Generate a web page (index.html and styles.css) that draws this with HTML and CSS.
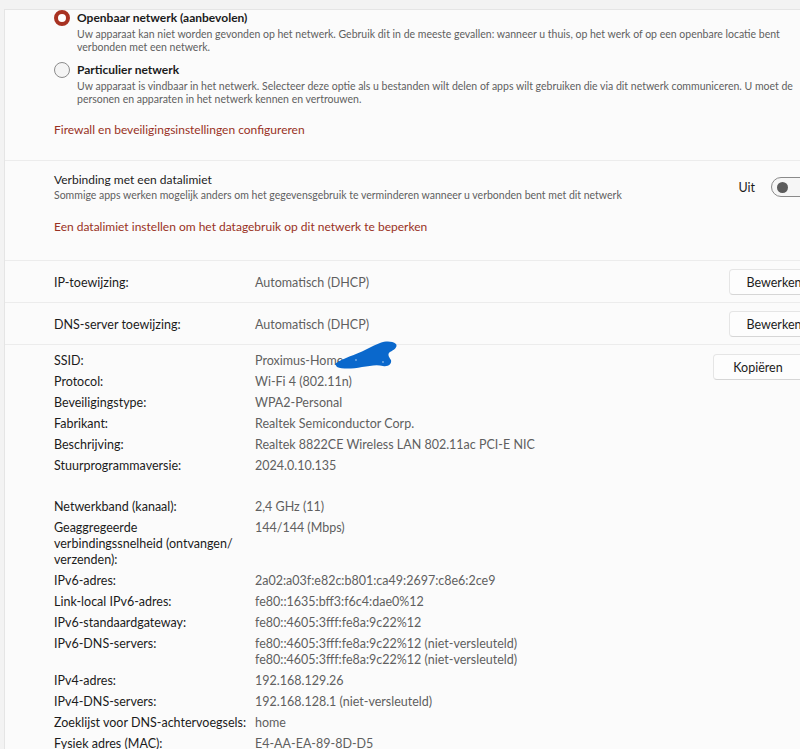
FILE: index.html
```html
<!DOCTYPE html>
<html lang="nl">
<head>
  <meta charset="UTF-8" />
  <title>Wi-Fi eigenschappen</title>
  <link rel="stylesheet" href="styles.css">
</head>
<body>
  <div class="card">

    <section class="section profile">
      <div class="radio-row">
        <span class="radio checked"></span>
        <div>
          <div class="radio-title">Openbaar netwerk (aanbevolen)</div>
          <div class="desc">Uw apparaat kan niet worden gevonden op het netwerk. Gebruik dit in de meeste gevallen: wanneer u thuis, op het werk of op een openbare locatie bent<br>verbonden met een netwerk.</div>
        </div>
      </div>
      <div class="radio-row second">
        <span class="radio"></span>
        <div>
          <div class="radio-title">Particulier netwerk</div>
          <div class="desc">Uw apparaat is vindbaar in het netwerk. Selecteer deze optie als u bestanden wilt delen of apps wilt gebruiken die via dit netwerk communiceren. U moet de<br>personen en apparaten in het netwerk kennen en vertrouwen.</div>
        </div>
      </div>
      <a class="link" href="#">Firewall en beveiligingsinstellingen configureren</a>
    </section>

    <section class="section metered">
      <div class="setting-row">
        <div>
          <div class="setting-title">Verbinding met een datalimiet</div>
          <div class="desc">Sommige apps werken mogelijk anders om het gegevensgebruik te verminderen wanneer u verbonden bent met dit netwerk</div>
        </div>
        <div class="toggle-wrap">
          <span class="toggle-label">Uit</span>
          <span class="toggle"><span class="knob"></span></span>
        </div>
      </div>
      <a class="link" href="#">Een datalimiet instellen om het datagebruik op dit netwerk te beperken</a>
    </section>

    <section class="section edit-row">
      <span class="label">IP-toewijzing:</span>
      <span class="value">Automatisch (DHCP)</span>
      <button class="btn">Bewerken</button>
    </section>

    <section class="section edit-row">
      <span class="label">DNS-server toewijzing:</span>
      <span class="value">Automatisch (DHCP)</span>
      <button class="btn">Bewerken</button>
    </section>

    <section class="section props">
      <dl class="prop-list">
        <dt>SSID:</dt>
        <dd class="ssid">Proximus-Home
          <svg class="scribble" viewBox="0 0 64 30" width="64" height="30">
            <path d="M1 24 C6 20 14 17 22 14 C30 11 38 6 46 3 C52 1 58 1 62 4 C64 7 60 10 56 12 C53 14 55 17 57 20 C58 24 54 27 49 26 C42 24 36 26 28 27 C18 29 8 29 3 27 Z" fill="#0a68cc"/>
            <circle cx="22" cy="20" r="0.9" fill="#7fb0e6"/>
            <circle cx="49" cy="22" r="0.9" fill="#7fb0e6"/>
          </svg>
        </dd>
        <dt>Protocol:</dt>
        <dd>Wi-Fi 4 (802.11n)</dd>
        <dt>Beveiligingstype:</dt>
        <dd>WPA2-Personal</dd>
        <dt>Fabrikant:</dt>
        <dd>Realtek Semiconductor Corp.</dd>
        <dt>Beschrijving:</dt>
        <dd>Realtek 8822CE Wireless LAN 802.11ac PCI-E NIC</dd>
        <dt>Stuurprogrammaversie:</dt>
        <dd>2024.0.10.135</dd>
        <dt class="spacer"></dt>
        <dd class="spacer"></dd>
        <dt>Netwerkband (kanaal):</dt>
        <dd>2,4 GHz (11)</dd>
        <dt>Geaggregeerde<br>verbindingssnelheid (ontvangen/<br>verzenden):</dt>
        <dd>144/144 (Mbps)</dd>
        <dt>IPv6-adres:</dt>
        <dd>2a02:a03f:e82c:b801:ca49:2697:c8e6:2ce9</dd>
        <dt>Link-local IPv6-adres:</dt>
        <dd>fe80::1635:bff3:f6c4:dae0%12</dd>
        <dt>IPv6-standaardgateway:</dt>
        <dd>fe80::4605:3fff:fe8a:9c22%12</dd>
        <dt>IPv6-DNS-servers:</dt>
        <dd>fe80::4605:3fff:fe8a:9c22%12 (niet-versleuteld)<br>fe80::4605:3fff:fe8a:9c22%12 (niet-versleuteld)</dd>
        <dt>IPv4-adres:</dt>
        <dd>192.168.129.26</dd>
        <dt>IPv4-DNS-servers:</dt>
        <dd>192.168.128.1 (niet-versleuteld)</dd>
        <dt>Zoeklijst voor DNS-achtervoegsels:</dt>
        <dd>home</dd>
        <dt>Fysiek adres (MAC):</dt>
        <dd>E4-AA-EA-89-8D-D5</dd>
      </dl>
      <button class="btn copy">Kopiëren</button>
    </section>

  </div>
</body>
</html>
```

FILE: styles.css
```css
html, body {
    overflow: hidden;
}

body {
    margin: 0;
    padding: 0;
    background-color: #f3f3f3;
    font-family: Lato, "Noto Sans", sans-serif;
    color: #1b1b1b;
    -webkit-font-smoothing: antialiased;
}

.card {
    margin: 9px 0 0 4px;
    width: 836px;
    background: #fbfbfb;
    border: 1px solid #e5e5e5;
    border-right: none;
    border-bottom: none;
}

.section {
    padding-left: 49px;
    padding-right: 22px;
    border-top: 1px solid #ececec;
}

.section:first-child {
    border-top: none;
}

/* netwerkprofiel */
.profile {
    padding-top: 0;
    padding-bottom: 22px;
}

.radio-row {
    display: flex;
    gap: 7px;
    align-items: flex-start;
}

.radio-row.second {
    margin-top: 8px;
}

.radio {
    flex: 0 0 auto;
    width: 16px;
    height: 16px;
    box-sizing: border-box;
    border-radius: 50%;
    border: 1px solid #8b8b8b;
    background: #f4f4f4;
}

.radio.checked {
    border: 4px solid #a83222;
    background: #ffffff;
}

.radio-title {
    font-size: 12px;
    font-weight: 700;
    line-height: 16px;
    color: #1b1b1b;
}

.desc {
    font-size: 10.5px;
    line-height: 13px;
    color: #5f5f5f;
    margin-top: 2px;
    white-space: nowrap;
}

.link {
    display: block;
    font-size: 12px;
    line-height: 16px;
    color: #993124;
    text-decoration: none;
    margin-top: 16px;
}

/* datalimiet */
.metered {
    padding-top: 11px;
    padding-bottom: 25px;
}

.setting-row {
    display: flex;
    justify-content: space-between;
    align-items: center;
}

.setting-title {
    font-size: 12px;
    line-height: 16px;
}

.metered .desc {
    margin-top: 0;
    line-height: 14px;
}

.metered .link {
    margin-top: 17px;
}

.toggle-wrap {
    display: flex;
    align-items: center;
    gap: 16px;
    margin-right: 8px;
}

.toggle-label {
    font-size: 12.5px;
}

.toggle {
    width: 40px;
    height: 20px;
    box-sizing: border-box;
    border: 1px solid #8a8a8a;
    border-radius: 10px;
    background: #f6f6f6;
    display: flex;
    align-items: center;
    padding-left: 5px;
}

.knob {
    width: 11px;
    height: 11px;
    border-radius: 50%;
    background: #5c5c5c;
}

/* IP / DNS */
.edit-row {
    display: flex;
    align-items: center;
    padding-top: 8px;
    padding-bottom: 7px;
    font-size: 12.5px;
}

.label {
    width: 201px;
    flex: 0 0 auto;
}

.value {
    color: #5f5f5f;
    flex: 1 1 auto;
}

.btn {
    width: 90px;
    height: 26px;
    font-family: inherit;
    font-size: 12.5px;
    color: #1b1b1b;
    background: #fdfdfd;
    border: 1px solid #e5e5e5;
    border-bottom-color: #d6d6d6;
    border-radius: 4px;
    padding: 0;
}

/* eigenschappen */
.props {
    display: flex;
    align-items: flex-start;
    padding-top: 8px;
    padding-bottom: 20px;
}

.prop-list {
    margin: 0;
    flex: 1 1 auto;
    display: grid;
    grid-template-columns: 201px 1fr;
    row-gap: 5px;
    font-size: 12.5px;
    line-height: 16px;
}

.prop-list dt {
    white-space: nowrap;
}

.prop-list dd {
    margin: 0;
    color: #5f5f5f;
}

.prop-list .spacer {
    height: 15px;
}

.ssid {
    position: relative;
}

.scribble {
    position: absolute;
    left: 79px;
    top: -13px;
}

.btn.copy {
    margin-top: 1px;
    margin-right: 16px;
}
```
